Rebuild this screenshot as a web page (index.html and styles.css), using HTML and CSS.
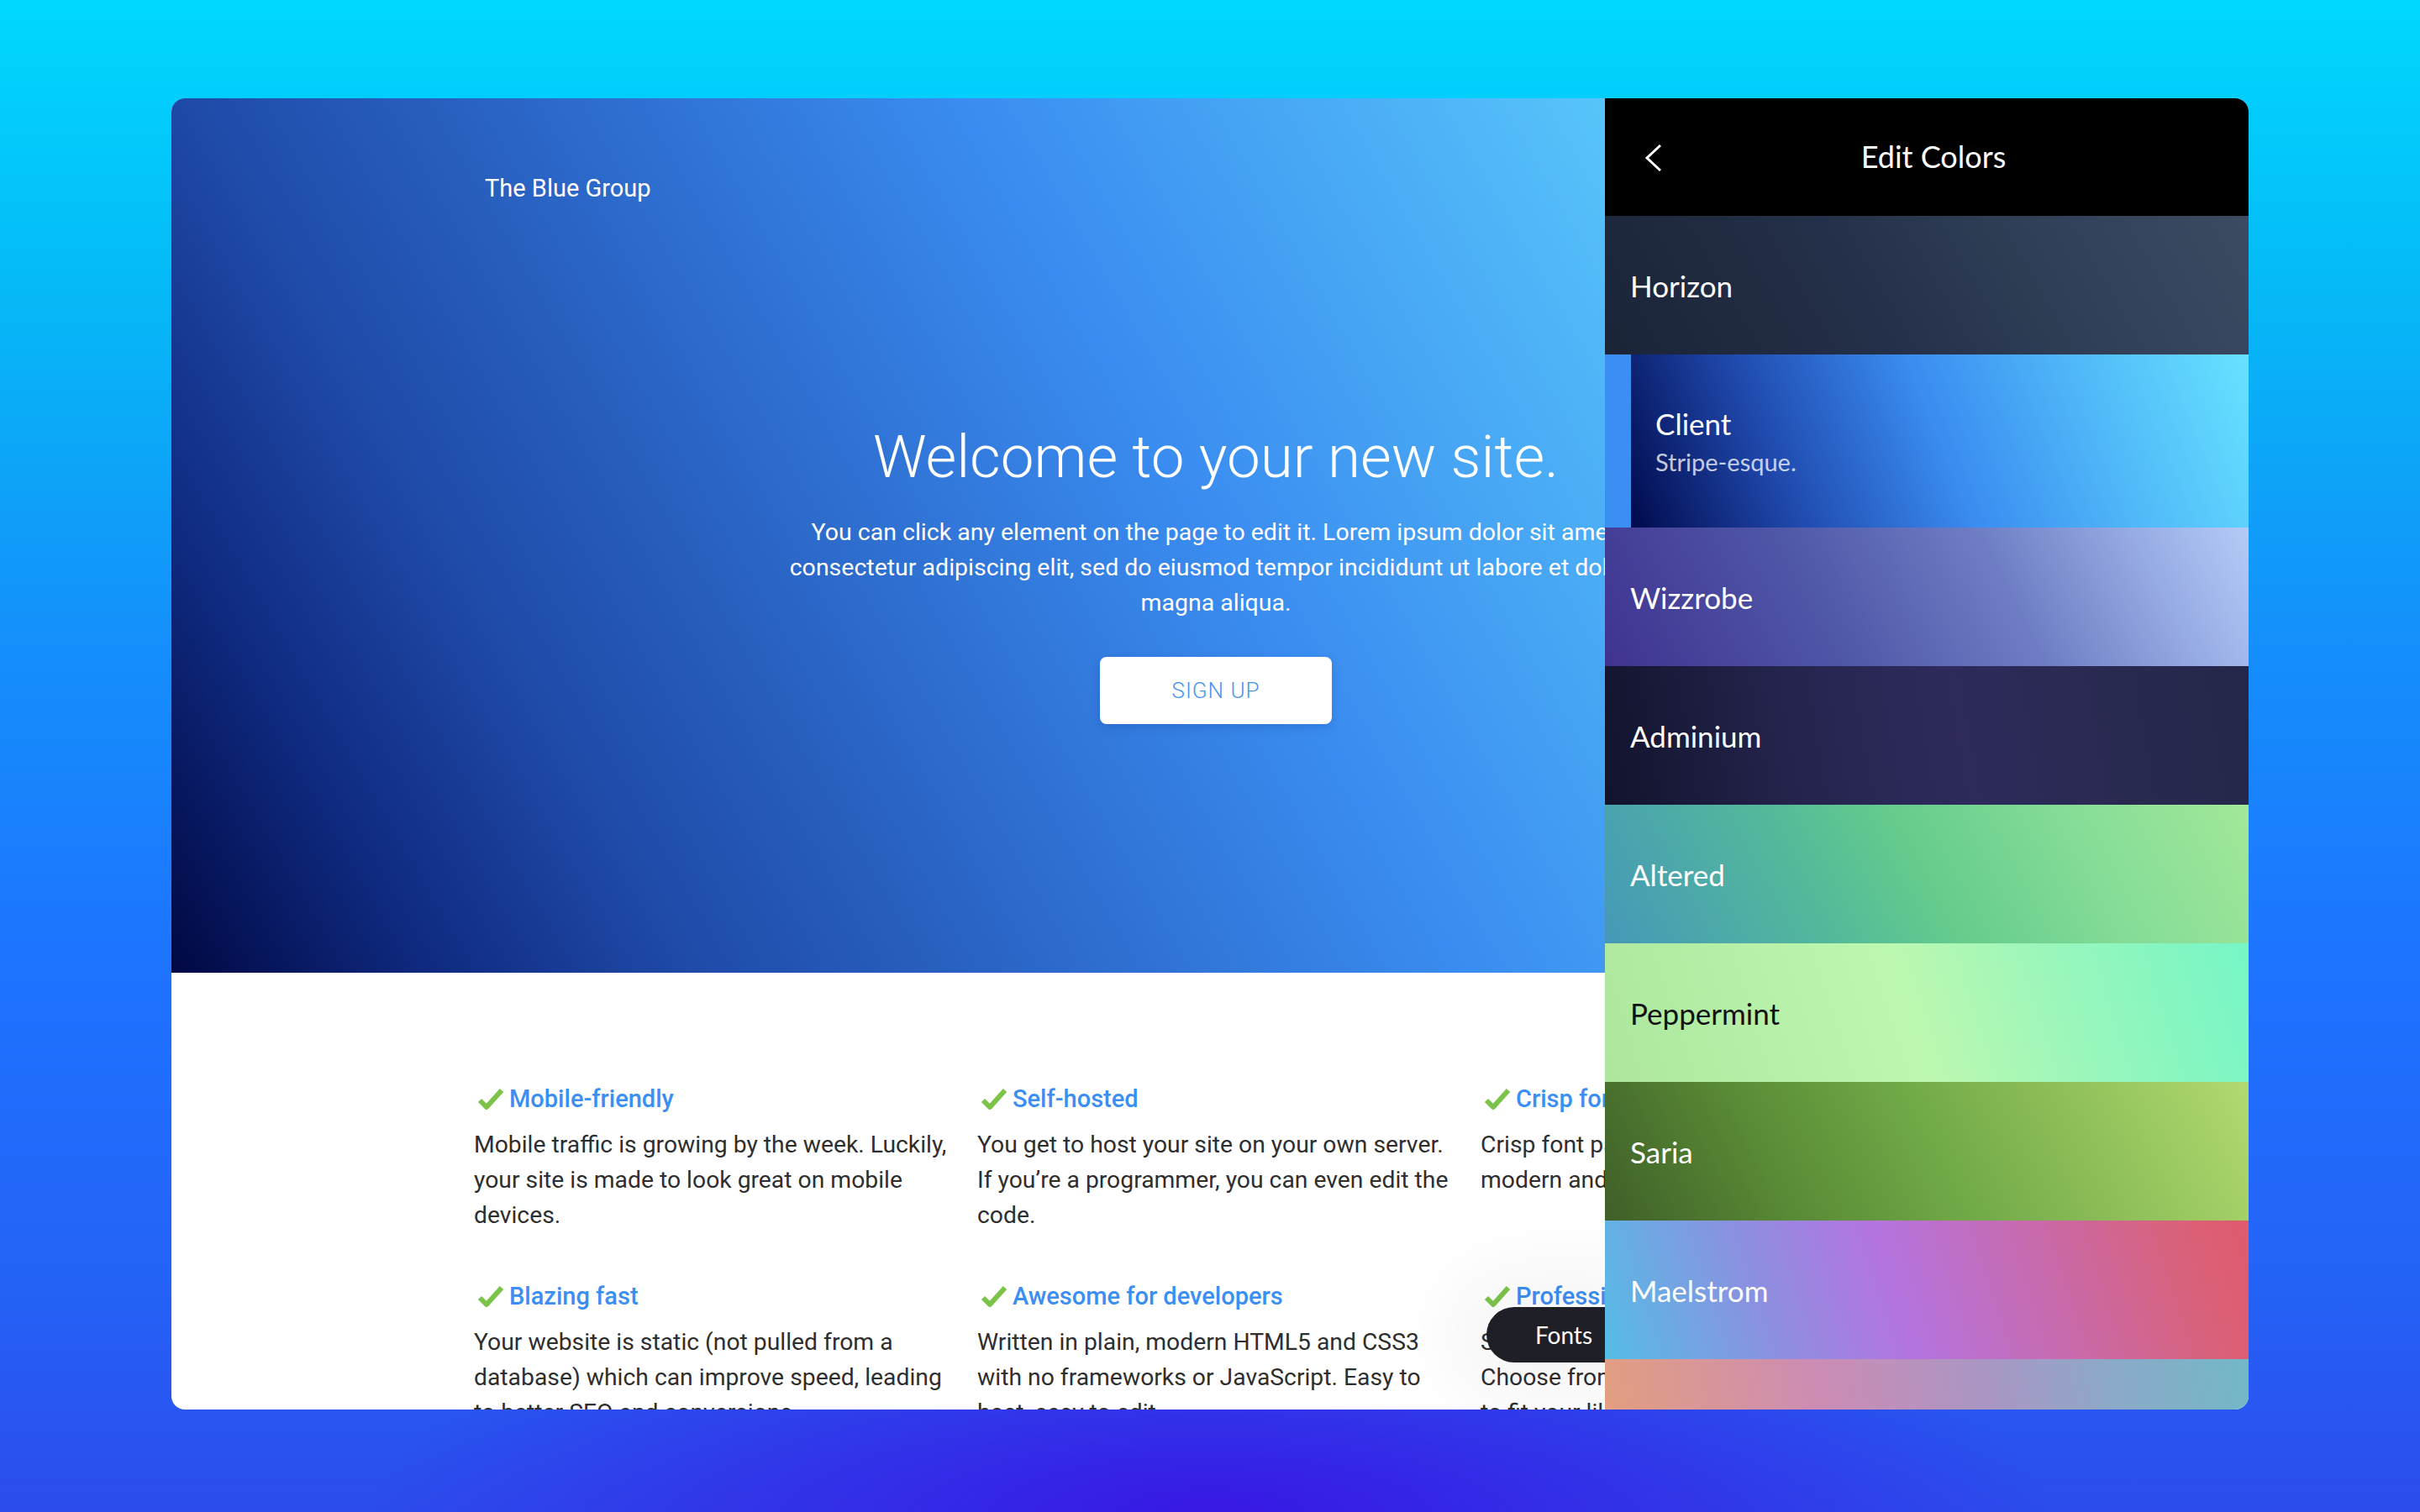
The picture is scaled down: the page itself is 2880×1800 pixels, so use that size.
FILE: index.html
```html
<!DOCTYPE html>
<html lang="en">
<head>
<meta charset="utf-8">
<title>The Blue Group</title>
<link rel="stylesheet" href="styles.css">
</head>
<body>
<div class="card">
  <div class="site">
    <header class="hero">
      <nav class="nav"><span class="logo">The Blue Group</span></nav>
      <div class="hero-body">
        <h1 class="hero-title">Welcome to your new site.</h1>
        <p class="hero-text">You can click any element on the page to edit it. Lorem ipsum dolor sit amet, consectetur adipiscing elit, sed do eiusmod tempor incididunt ut labore et dolore magna aliqua.</p>
        <a class="btn">SIGN UP</a>
      </div>
    </header>
    <section class="features">
      <div class="feature">
        <h3 class="feature-title"><svg class="check" viewBox="0 0 32 28"><path d="M3 16 L11 24 L29 4" fill="none" stroke="#7cc449" stroke-width="6" stroke-linejoin="round"/></svg>Mobile-friendly</h3>
        <p class="feature-text">Mobile traffic is growing by the week. Luckily, your site is made to look great on mobile devices.</p>
      </div>
      <div class="feature">
        <h3 class="feature-title"><svg class="check" viewBox="0 0 32 28"><path d="M3 16 L11 24 L29 4" fill="none" stroke="#7cc449" stroke-width="6" stroke-linejoin="round"/></svg>Self-hosted</h3>
        <p class="feature-text">You get to host your site on your own server. If you’re a programmer, you can even edit the code.</p>
      </div>
      <div class="feature">
        <h3 class="feature-title"><svg class="check" viewBox="0 0 32 28"><path d="M3 16 L11 24 L29 4" fill="none" stroke="#7cc449" stroke-width="6" stroke-linejoin="round"/></svg>Crisp fonts</h3>
        <p class="feature-text">Crisp font pairings that always look sharp, modern and elegant.</p>
      </div>
      <div class="feature">
        <h3 class="feature-title"><svg class="check" viewBox="0 0 32 28"><path d="M3 16 L11 24 L29 4" fill="none" stroke="#7cc449" stroke-width="6" stroke-linejoin="round"/></svg>Blazing fast</h3>
        <p class="feature-text">Your website is static (not pulled from a database) which can improve speed, leading to better SEO and conversions.</p>
      </div>
      <div class="feature">
        <h3 class="feature-title"><svg class="check" viewBox="0 0 32 28"><path d="M3 16 L11 24 L29 4" fill="none" stroke="#7cc449" stroke-width="6" stroke-linejoin="round"/></svg>Awesome for developers</h3>
        <p class="feature-text">Written in plain, modern HTML5 and CSS3 with no frameworks or JavaScript. Easy to host, easy to edit.</p>
      </div>
      <div class="feature">
        <h3 class="feature-title"><svg class="check" viewBox="0 0 32 28"><path d="M3 16 L11 24 L29 4" fill="none" stroke="#7cc449" stroke-width="6" stroke-linejoin="round"/></svg>Professional design</h3>
        <p class="feature-text">Sleek and stylish designs come built right in. Choose from a large collection of color tones to fit your liking.</p>
      </div>
    </section>
    <button class="fonts-pill">Fonts</button>
  </div>

  <aside class="panel">
    <div class="panel-head">
      <svg class="back" viewBox="0 0 22 34"><polyline points="19,2 3,17 19,32" fill="none" stroke="#fff" stroke-width="3"/></svg>
      <span class="panel-title">Edit Colors</span>
    </div>
    <div class="swatch horizon"><span class="swatch-name">Horizon</span></div>
    <div class="swatch client selected">
      <span class="swatch-name">Client</span>
      <span class="swatch-sub">Stripe-esque.</span>
    </div>
    <div class="swatch wizzrobe"><span class="swatch-name">Wizzrobe</span></div>
    <div class="swatch adminium"><span class="swatch-name">Adminium</span></div>
    <div class="swatch altered"><span class="swatch-name">Altered</span></div>
    <div class="swatch peppermint"><span class="swatch-name">Peppermint</span></div>
    <div class="swatch saria"><span class="swatch-name">Saria</span></div>
    <div class="swatch maelstrom"><span class="swatch-name">Maelstrom</span></div>
    <div class="swatch sunset"><span class="swatch-name"></span></div>
  </aside>
</div>
</body>
</html>
```
FILE: styles.css
```css
* { box-sizing: border-box; }

html, body {
  margin: 0;
  width: 2880px;
  height: 1800px;
  overflow: hidden;
}

body {
  padding: 117px 0 0 204px;
  background:
    radial-gradient(ellipse 1000px 280px at 50% 100%, rgba(56, 24, 228, 1), rgba(56, 24, 228, 0)),
    linear-gradient(180deg, #00d8ff 0%, #06b8f6 20%, #1490fb 42%, #1e72ff 65%, #2462f6 85%, #2c4cec 100%);
  font-family: "Roboto", "Noto Sans", sans-serif;
}

.card {
  position: relative;
  width: 2472px;
  height: 1561px;
  border-radius: 16px;
  overflow: hidden;
  background: #fff;
}

.site {
  position: relative;
  width: 100%;
  height: 100%;
}

/* HERO */
.hero {
  height: 1041px;
  padding-top: 87px;
  background: linear-gradient(60deg, #010843 0%, #0f2a80 10%, #1f4aa8 20%, #3a8cf0 50%, #57c4fa 75%, #70e0ff 100%);
  color: #fff;
}

.nav {
  height: 40px;
  padding-left: 373px;
  display: flex;
  align-items: center;
}

.logo {
  font-size: 29px;
  font-weight: 400;
  line-height: 40px;
}

.hero-body {
  margin-top: 257px;
  padding-left: 14px;
  display: flex;
  flex-direction: column;
  align-items: center;
  text-align: center;
}

.hero-title {
  margin: 0;
  font-size: 71px;
  font-weight: 300;
  line-height: 86px;
}

.hero-text {
  margin: 26px 0 0;
  width: 1060px;
  font-size: 28.5px;
  font-weight: 400;
  line-height: 42px;
}

.btn {
  margin-top: 43px;
  width: 276px;
  height: 80px;
  display: flex;
  align-items: center;
  justify-content: center;
  background: #fff;
  border-radius: 8px;
  color: #4593f2;
  font-size: 26px;
  font-weight: 300;
  letter-spacing: 1px;
  box-shadow: 0 4px 12px rgba(10, 40, 120, 0.18);
}

/* FEATURES */
.features {
  display: grid;
  grid-template-columns: repeat(3, 571px);
  column-gap: 28px;
  row-gap: 54px;
  padding: 129px 0 0 360px;
}

.feature-title {
  margin: 0;
  display: flex;
  align-items: center;
  font-size: 29px;
  font-weight: 500;
  line-height: 42px;
  color: #3b8ef3;
}

.check {
  width: 32px;
  height: 28px;
  margin: 0 6px 0 4px;
  flex: none;
}

.feature-text {
  margin: 13px 0 0;
  font-size: 28.3px;
  line-height: 42px;
  color: #2e2e2e;
}

.fonts-pill {
  position: absolute;
  left: 1565px;
  top: 1439px;
  width: 184px;
  height: 66px;
  border: 0;
  border-radius: 33px;
  background: #1e1f27;
  color: #fff;
  font-family: "Lato", sans-serif;
  font-size: 28px;
  box-shadow: 0 0 90px 50px rgba(20, 30, 60, 0.04);
}

/* PANEL */
.panel {
  position: absolute;
  top: 0;
  right: 0;
  bottom: 0;
  width: 766px;
  display: flex;
  flex-direction: column;
  font-family: "Lato", sans-serif;
  color: #fff;
}

.panel-head {
  position: relative;
  height: 140px;
  flex: none;
  background: #000;
  display: flex;
  align-items: center;
  justify-content: center;
}

.back {
  position: absolute;
  left: 47px;
  top: 54px;
  width: 22px;
  height: 34px;
}

.panel-title {
  font-size: 36px;
  font-weight: 400;
  margin-left: 16px;
  margin-top: -2px;
}

.swatch {
  height: 165px;
  flex: none;
  display: flex;
  flex-direction: column;
  justify-content: center;
  padding-left: 30px;
}

.swatch-name {
  font-size: 35px;
  font-weight: 400;
  line-height: 44px;
}

.swatch-sub {
  font-size: 29px;
  line-height: 36px;
  opacity: 0.75;
  margin-top: 6px;
}

.selected {
  height: 206px;
  border-left: 31px solid #3b8ff2;
  padding-left: 29px;
}

.horizon { background: linear-gradient(60deg, #1b2437 0%, #243049 40%, #33425a 75%, #3c4b62 100%); }
.client { background: linear-gradient(68deg, #010a4c 0%, #1f48ac 24%, #3a8cf0 50%, #50b8f8 74%, #66e2ff 100%); }
.wizzrobe { background: linear-gradient(62deg, #3f3390 0%, #5058a8 35%, #6f7ec4 62%, #9aaee6 85%, #b4cbf6 100%); }
.adminium { background: linear-gradient(80deg, #12132c 0%, #25244e 30%, #2e2b5c 55%, #28294f 80%, #24274a 100%); }
.altered { background: linear-gradient(62deg, #4598b8 0%, #55bc98 35%, #66cc8c 50%, #86dd98 75%, #a2e898 100%); }
.peppermint { background: linear-gradient(72deg, #ade69c 0%, #b8f2aa 30%, #bcf8b0 48%, #98f6bc 72%, #76f6c6 100%); color: #111; }
.saria { background: linear-gradient(62deg, #3f5f28 0%, #5a8c36 28%, #72aa48 52%, #92c25c 76%, #b2da70 100%); }
.maelstrom { background: linear-gradient(72deg, #55bde6 0%, #8c90e0 25%, #b474e0 45%, #c86aac 68%, #d8627c 88%, #e05a6c 100%); }
.sunset { background: linear-gradient(80deg, #e4a07c 0%, #cc8cb4 35%, #aa96c4 60%, #8aaac8 80%, #72b8c6 100%); }
```
